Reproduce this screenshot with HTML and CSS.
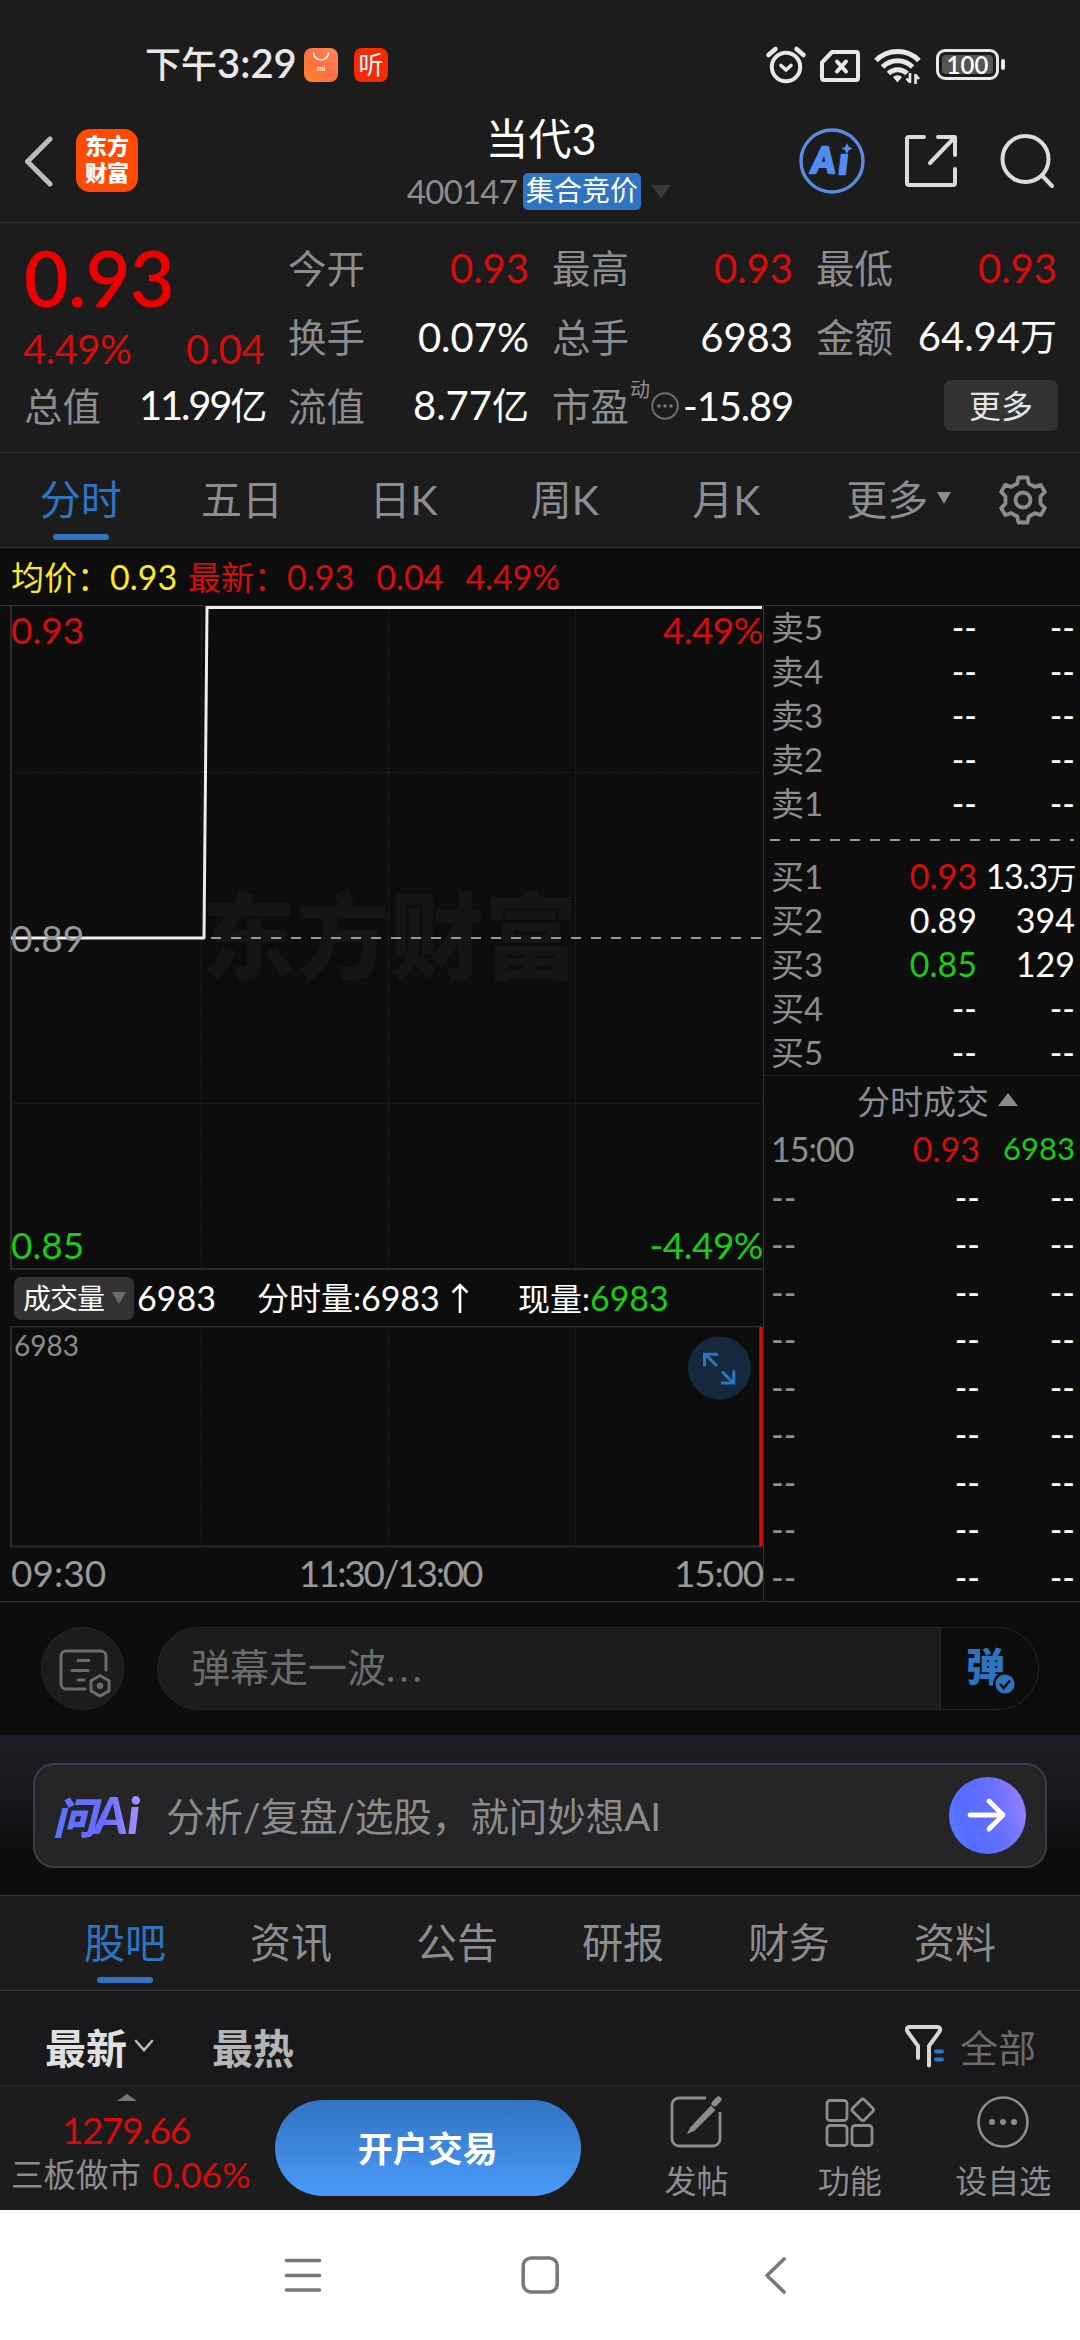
FILE: index.html
```html
<!DOCTYPE html>
<html lang="zh-CN">
<head>
  <meta charset="UTF-8" />
  <meta name="viewport" content="width=device-width, initial-scale=1.0" />
  <title>当代3 400147</title>
  <link rel="stylesheet" href="styles.css">
</head>
<body>
  <div id="app">

    <div class="statusbar">
      <span class="clock">下午<b>3:29</b></span>
      <svg class="app-mi" width="34" height="34" viewBox="0 0 34 34">
        <defs>
          <linearGradient id="miBg" x1="0" y1="1" x2="1" y2="0">
            <stop offset="0" stop-color="#ff8425" /><stop offset="0.5" stop-color="#ff7043" /><stop offset="1" stop-color="#ff8a5c" />
          </linearGradient>
        </defs>
        <rect width="34" height="34" rx="8" fill="url(#miBg)" />
        <path d="M9.500 4.500a7.500 7.500 0 0 0 15 0" fill="none" stroke="#fff" stroke-width="1.600" />
        <text x="17" y="23" class="mi">mi</text>
      </svg>
      <span class="app-ting">听</span>
      <div class="status-icons">
        <svg width="42" height="40" viewBox="0 0 42 40" fill="none" stroke="#e8e8e8" stroke-linecap="round">
          <circle cx="21" cy="22" r="14.200" stroke-width="4" />
          <path d="M3.500 10l7-6M38.500 10l-7-6" stroke-width="4.500" />
          <path d="M16 20.500l5 4.500 5-4.500" stroke-width="3.600" stroke-linejoin="round" />
        </svg>
        <svg class="sim" width="40" height="32" viewBox="0 0 40 32" fill="none" stroke="#e8e8e8" stroke-linecap="round" stroke-linejoin="round">
          <path d="M2 12.500L12 2h24a2 2 0 0 1 2 2v24a2 2 0 0 1-2 2H4a2 2 0 0 1-2-2z" stroke-width="4" />
          <path d="M17 11.500l9 10M26 11.500l-9 10" stroke-width="4" />
        </svg>
        <svg class="wifi" width="48" height="36" viewBox="0 0 48 36" fill="none" stroke="#e8e8e8">
          <path d="M2 12.500a30 30 0 0 1 43 0" stroke-width="5" />
          <path d="M8.500 19a21 21 0 0 1 30 0" stroke-width="5" />
          <path d="M14.500 25.500a13 13 0 0 1 18.500 0" stroke-width="5" />
          <path d="M19 29a7 7 0 0 1 9 0l-4.500 5.500z" fill="#e8e8e8" stroke="none" />
          <path d="M36 25v10M36 34.500l-3.500-4M41.500 36V26M41.500 27l3.500 4" stroke-width="2.600" />
        </svg>
        <span class="battery"><i>100</i></span>
      </div>
    </div>

    <div class="header">
      <svg class="back" width="30" height="52" viewBox="0 0 30 52" fill="none" stroke="#bdbdbd" stroke-width="5" stroke-linecap="round" stroke-linejoin="round">
        <path d="M26 4L3.500 26.500 26 49" />
      </svg>
      <div class="brand"><span>东方</span><span>财富</span></div>
      <div class="title">
        <h1>当代3</h1>
        <div class="subtitle">
          <span>400147</span>
          <span class="tag">集合竞价</span>
          <svg width="20" height="13" viewBox="0 0 20 13"><path d="M0 0h20L10 13z" fill="#3a3a3a" /></svg>
        </div>
      </div>
      <div class="header-icons">
        <svg width="66" height="66" viewBox="0 0 66 66">
          <circle cx="33" cy="33" r="31" fill="none" stroke="#568ce0" stroke-width="3.400" />
          <text x="12.500" y="45" class="ai-a">A</text>
          <text x="40" y="46" class="ai-a">ı</text>
          <path d="M48 15l1.800 3.700 3.700 1.800-3.700 1.800-1.800 3.700-1.800-3.700-3.700-1.800 3.700-1.800z" fill="#4f8df0" />
        </svg>
        <svg width="54" height="54" viewBox="0 0 54 54" fill="none" stroke="#dcdcdc" stroke-width="4" stroke-linecap="round" stroke-linejoin="round">
          <path d="M20 3H5a2 2 0 0 0-2 2v44a2 2 0 0 0 2 2h44a2 2 0 0 0 2-2V35" />
          <path d="M34 3h17v18M50 4L26 29" />
        </svg>
        <svg width="56" height="56" viewBox="0 0 56 56" fill="none" stroke="#dcdcdc" stroke-width="4" stroke-linecap="round">
          <circle cx="25.500" cy="26" r="23" />
          <path d="M43 43.500L52 53" />
        </svg>
      </div>
    </div>

    <div class="quote">
      <div class="price-box">
        <div class="price">0.93</div>
        <div class="cell change"><em class="red">4.49%</em><em class="red">0.04</em></div>
      </div>
      <div class="cell c2">今开<em class="red">0.93</em></div>
      <div class="cell c3">最高<em class="red">0.93</em></div>
      <div class="cell c4">最低<em class="red">0.93</em></div>
      <div class="cell c2">换手<em>0.07%</em></div>
      <div class="cell c3">总手<em>6983</em></div>
      <div class="cell c4">金额<em>64.94<u>万</u></em></div>
      <div class="cell c1">总值<em class="narrow">11.99<u>亿</u></em></div>
      <div class="cell c2">流值<em>8.77<u>亿</u></em></div>
      <div class="cell c3">市盈<sup>动</sup>
        <svg width="30" height="30" viewBox="0 0 30 30"><circle cx="15" cy="15" r="12.800" fill="none" stroke="#6f6f73" stroke-width="2" /><circle cx="9" cy="15" r="1.800" fill="#77777b" /><circle cx="15" cy="15" r="1.800" fill="#77777b" /><circle cx="21" cy="15" r="1.800" fill="#77777b" /></svg>
        <em class="pe">-15.89</em></div>
      <div class="cell c4"><button class="more">更多</button></div>
    </div>

    <div class="tabs period">
      <div class="tab active">分时</div>
      <div class="tab">五日</div>
      <div class="tab">日K</div>
      <div class="tab">周K</div>
      <div class="tab">月K</div>
      <div class="tab wide">更多<svg width="14" height="12" viewBox="0 0 14 12"><path d="M0 0h14L7 12z" fill="#8c8c91" /></svg></div>
      <div class="gear">
        <svg width="50" height="52" viewBox="-25 -26 50 52" fill="none" stroke="#8c8c91" stroke-width="3.800" stroke-linejoin="round">
          <path d="M-4.500-22.500h9l1.300 6 6 3.400 6-2 4 7-4.300 4.600v7l4.300 4.600-4 7-6-2-6 3.400-1.300 6h-9l-1.300-6-6-3.400-6 2-4-7 4.300-4.600v-7l-4.300-4.600 4-7 6 2 6-3.400z" />
          <circle r="7.500" />
        </svg>
      </div>
    </div>

    <div class="info">
      <span class="yellow">均价：</span><em class="yellow">0.93</em>
      <span class="red latest">最新：</span><em class="red">0.93</em><em class="red">0.04</em><em class="red">4.49%</em>
    </div>

    <div class="market">
      <div class="charts">
        <svg class="price-chart" width="763" height="665" viewBox="0 605 763 665">
          <text class="watermark" x="202" y="972" textLength="376">东方财富</text>
          <g class="grid">
            <path d="M201.500 606V1268M388.500 606V1268M575.500 606V1268" />
            <path class="h" d="M11 772.500H762M11 1103.500H762" />
          </g>
          <path class="frame" d="M11 606V1269H762" />
          <path class="mid" d="M11 938H762" />
          <path class="line" d="M11 938H204L207 607.500H762" />
          <text class="axis red" x="11" y="644">0.93</text>
          <text class="axis red end" x="763" y="644">4.49%</text>
          <text class="axis" x="11" y="952">0.89</text>
          <text class="axis green" x="11" y="1259">0.85</text>
          <text class="axis green end" x="763" y="1259">-4.49%</text>
        </svg>
        <div class="indicator">
          <span class="picker">成交量<svg width="14" height="12" viewBox="0 0 14 12"><path d="M0 0h14L7 12z" fill="#6c6c6c" /></svg></span>
          <em>6983</em>
          <span class="minute">分时量:<em>6983</em><svg width="18" height="32" viewBox="0 0 18 32" fill="none" stroke="#fff" stroke-width="2.600"><path d="M9 31V3M1.500 10.500L9 3l7.500 7.500" /></svg></span>
          <span class="now">现量:<em class="green">6983</em></span>
        </div>
        <svg class="volume-chart" width="763" height="222" viewBox="0 1326 763 222">
          <g class="grid"><path d="M201.500 1327V1546M388.500 1327V1546M575.500 1327V1546" /></g>
          <path class="frame" d="M762 1326.500H11V1546.500H762" />
          <path d="M761 1327V1546.500" stroke="#d80c0c" stroke-width="3.500" />
          <text class="small" x="14" y="1356">6983</text>
          <circle cx="719.500" cy="1368" r="31.500" fill="#16283d" />
          <path d="M717 1366l-11-11M704.500 1366.500v-12.300h13.500M722 1371.500l11.500 11.500M721 1383h12.800v-12.700" fill="none" stroke="#2f74c0" stroke-width="3" />
        </svg>
        <div class="times"><span>09:30</span><span class="noon">11:30/13:00</span><span class="close">15:00</span></div>
      </div>

      <div class="book">
        <div class="orders">
          <div class="row"><span>卖5</span><em>--</em><em>--</em></div>
          <div class="row"><span>卖4</span><em>--</em><em>--</em></div>
          <div class="row"><span>卖3</span><em>--</em><em>--</em></div>
          <div class="row"><span>卖2</span><em>--</em><em>--</em></div>
          <div class="row"><span>卖1</span><em>--</em><em>--</em></div>
        </div>
        <div class="split"></div>
        <div class="orders">
          <div class="row"><span>买1</span><em class="red">0.93</em><em class="tight">13.3<u>万</u></em></div>
          <div class="row"><span>买2</span><em>0.89</em><em>394</em></div>
          <div class="row"><span>买3</span><em class="green">0.85</em><em>129</em></div>
          <div class="row"><span>买4</span><em>--</em><em>--</em></div>
          <div class="row"><span>买5</span><em>--</em><em>--</em></div>
        </div>
        <div class="deals-title">分时成交<svg width="20" height="13" viewBox="0 0 20 13"><path d="M0 13h20L10 0z" fill="#8c8c91" /></svg></div>
        <div class="deals">
          <div class="row"><span class="time">15:00</span><em class="red">0.93</em><em class="green vol">6983</em></div>
          <div class="row"><span>--</span><em>--</em><em>--</em></div>
          <div class="row"><span>--</span><em>--</em><em>--</em></div>
          <div class="row"><span>--</span><em>--</em><em>--</em></div>
          <div class="row"><span>--</span><em>--</em><em>--</em></div>
          <div class="row"><span>--</span><em>--</em><em>--</em></div>
          <div class="row"><span>--</span><em>--</em><em>--</em></div>
          <div class="row"><span>--</span><em>--</em><em>--</em></div>
          <div class="row"><span>--</span><em>--</em><em>--</em></div>
          <div class="row"><span>--</span><em>--</em><em>--</em></div>
        </div>
      </div>
    </div>

    <div class="danmu">
      <div class="danmu-set">
        <svg width="52" height="50" viewBox="0 0 52 50" fill="none" stroke="#6b6b6b" stroke-width="3" stroke-linecap="round" stroke-linejoin="round">
          <path d="M47 22V8a5 5 0 0 0-5-5H7a5 5 0 0 0-5 5v28a5 5 0 0 0 5 5h19" />
          <path d="M19 12.500h11M13 22.500h16M19 32h6" />
          <path d="M41 27.500l9 5.200v10.200l-9 5.200-9-5.200V32.700z" />
          <circle cx="41" cy="37.800" r="1.800" fill="#6b6b6b" />
        </svg>
      </div>
      <div class="danmu-input">
        <span>弹幕走一波<u>...</u></span>
        <div class="danmu-toggle">
          <i>弹</i>
          <svg width="24" height="24" viewBox="0 0 24 24"><circle cx="12" cy="12" r="10.800" fill="#2f74c0" stroke="#0d0d0d" stroke-width="2.400" /><path d="M7 12l3.500 4 6.500-7.500" fill="none" stroke="#0d0d0d" stroke-width="2.600" /></svg>
        </div>
      </div>
    </div>

    <div class="ask">
      <div class="ask-box">
        <span class="ask-logo">问<b>Ai</b></span>
        <span class="ask-text">分析/复盘/选股，就问妙想AI</span>
        <div class="ask-go">
          <svg width="42" height="36" viewBox="0 0 42 36" fill="none" stroke="#fff" stroke-width="4.800" stroke-linecap="round" stroke-linejoin="round"><path d="M4 18h32M23 4l14 14-14 14" /></svg>
        </div>
      </div>
    </div>

    <div class="tabs sections">
      <div class="tab active">股吧</div>
      <div class="tab">资讯</div>
      <div class="tab">公告</div>
      <div class="tab">研报</div>
      <div class="tab">财务</div>
      <div class="tab">资料</div>
    </div>

    <div class="filter">
      <span class="newest">最新</span>
      <svg class="chev" width="20" height="13" viewBox="0 0 20 13" fill="none" stroke="#bbb" stroke-width="2.600" stroke-linecap="round"><path d="M2 2l8 9 8-9" /></svg>
      <span class="hottest">最热</span>
      <svg class="funnel" width="40" height="44" viewBox="0 0 40 44" fill="none" stroke="#d6d6d6" stroke-width="4" stroke-linecap="round" stroke-linejoin="round">
        <path d="M13 34V22L2.500 7.500C1 5 2 3 4.500 3h28c2.500 0 3.500 2 2 4.500L24 22v19.500" />
        <path d="M31 27.500h6M31 35.500h6" stroke="#2f74c0" />
      </svg>
      <span class="all">全部</span>
    </div>

    <div class="bottombar">
      <div class="index">
        <svg width="20" height="7" viewBox="0 0 20 7"><path d="M0 7h20L10 0z" fill="#77777b" /></svg>
        <em class="red">1279.66</em>
        <div class="index-name">三板做市<em class="red">0.06%</em></div>
      </div>
      <button class="trade">开户交易</button>
      <div class="action">
        <svg width="54" height="54" viewBox="0 0 54 54" fill="none" stroke="#8c8c91" stroke-width="2.800">
          <path d="M37 3H10a7 7 0 0 0-7 7v34a7 7 0 0 0 7 7h34a7 7 0 0 0 7-7V17" />
          <path d="M22 33L42 12l3 3-20 20-5 2z" fill="#8c8c91" stroke-width="2" />
          <path d="M45.500 8.500l4-4" stroke-width="6" stroke-linecap="round" />
        </svg>
        <span>发帖</span>
      </div>
      <div class="action">
        <svg width="54" height="54" viewBox="0 0 54 54" fill="none" stroke="#8c8c91" stroke-width="2.800" stroke-linejoin="round">
          <rect x="4" y="5.500" width="20" height="20" rx="3" />
          <rect x="4" y="30.500" width="20" height="20" rx="3" />
          <rect x="29" y="30.500" width="20" height="20" rx="3" />
          <rect x="31.500" y="6.500" width="16.500" height="16.500" rx="2.500" transform="rotate(45 39.700 14.800)" />
        </svg>
        <span>功能</span>
      </div>
      <div class="action">
        <svg width="54" height="54" viewBox="0 0 54 54"><circle cx="27" cy="27" r="24.500" fill="none" stroke="#8c8c91" stroke-width="2.600" /><circle cx="16" cy="27" r="3" fill="#8c8c91" /><circle cx="27" cy="27" r="3" fill="#8c8c91" /><circle cx="38" cy="27" r="3" fill="#8c8c91" /></svg>
        <span>设自选</span>
      </div>
    </div>

    <div class="navbar">
      <svg width="38" height="38" viewBox="0 0 38 38" stroke="#787878" stroke-width="3.600" stroke-linecap="round"><path d="M2.500 4.500h33M2.500 19.500h33M2.500 34h33" /></svg>
      <svg width="38" height="38" viewBox="0 0 38 38" fill="none" stroke="#787878" stroke-width="3.600"><rect x="2.200" y="2" width="34" height="34" rx="8" /></svg>
      <svg width="38" height="38" viewBox="0 0 38 38" fill="none" stroke="#787878" stroke-width="3.600" stroke-linecap="round" stroke-linejoin="round"><path d="M27 3L10 19.500 27 36" /></svg>
    </div>

  </div>
</body>
</html>
```
FILE: styles.css
```css
* {
  box-sizing: border-box;
}

body {
  margin: 0;
  background-color: #1c1c1c;
  color: #8c8c91;
  font-family: Lato, "Noto Sans CJK SC", sans-serif;
}

#app {
  width: 1080px;
  height: 2340px;
  overflow: hidden;
  display: flex;
  flex-direction: column;
}

#app > div {
  flex: none;
}

svg {
  display: block;
  flex: none;
}

em, i, u {
  font-style: normal;
  text-decoration: none;
}

em {
  color: #fff;
}

button {
  border: 0;
  padding: 0;
  font-family: inherit;
}

.red {
  color: #d80c0c;
  fill: #d80c0c;
}

.green {
  color: #18cc18;
  fill: #18cc18;
}

.yellow {
  color: #fbea24;
}

/* status bar */
.statusbar {
  height: 115px;
  padding: 14px 75px 0 145px;
  display: flex;
  align-items: center;
}

.clock {
  width: 159px;
  font-size: 36px;
  font-weight: 500;
  line-height: 48px;
  margin-top: -2px;
  color: #e8e8e8;
  white-space: nowrap;
}

.clock b {
  font-size: 40px;
  font-weight: 600;
}

.mi {
  font-size: 8px;
  font-weight: 700;
  text-anchor: middle;
  fill: #fff;
}

.app-ting {
  width: 34px;
  height: 34px;
  margin-left: 16px;
  border-radius: 8px;
  background-color: #f82a04;
  color: #fff;
  font-size: 25px;
  line-height: 32px;
  text-align: center;
}

.status-icons {
  margin-left: auto;
  display: flex;
  align-items: center;
}

.sim {
  margin: 3px 0 0 13px;
}

.wifi {
  margin: 2px 0 0 14px;
}

.battery {
  position: relative;
  width: 63px;
  height: 31px;
  margin: 0 6px 0 14px;
  padding: 3px;
  border: 3px solid #e8e8e8;
  border-radius: 9px;
}

.battery i {
  display: block;
  height: 19px;
  border-radius: 4px;
  background-color: #555;
  color: #fff;
  font-size: 24px;
  font-weight: 600;
  line-height: 19px;
  text-align: center;
}

.battery::after {
  content: "";
  position: absolute;
  right: -9px;
  top: 7px;
  width: 4px;
  height: 11px;
  border-radius: 2px;
  background-color: #e8e8e8;
}

/* header */
.header {
  height: 108px;
  border-bottom: 1px solid #333;
  display: flex;
  align-items: flex-start;
}

.back {
  margin: 20px 0 0 24px;
}

.brand {
  width: 62px;
  height: 63px;
  margin: 14px 0 0 22px;
  padding-top: 3px;
  border-radius: 14px;
  background-color: #fe4a04;
  color: #fff;
  font-size: 22px;
  font-weight: 900;
  line-height: 27px;
  text-align: center;
}

.brand span {
  display: block;
}

.title {
  width: 264px;
  margin-left: 269px;
}

.title h1 {
  margin: 0 0 0 4px;
  color: #fff;
  font-size: 43px;
  font-weight: 400;
  line-height: 48px;
  text-align: center;
}

.subtitle {
  height: 38px;
  margin-top: 9px;
  display: flex;
  align-items: center;
  font-size: 33px;
  line-height: 38px;
}

.tag {
  width: 118px;
  height: 37px;
  margin: 0 10px 0 8px;
  border-radius: 5px;
  background-color: #2f74c0;
  color: #fff;
  font-size: 28px;
  line-height: 35px;
  text-align: center;
}

.subtitle span:first-child {
  width: 108px;
  letter-spacing: -0.8px;
}

.header-icons {
  margin: 13px 0 0 128px;
  display: flex;
  align-items: center;
}

.header-icons svg + svg {
  margin-left: 39px;
}

.header-icons svg:last-child {
  margin-left: 42px;
}

.ai-a {
  font-size: 36px;
  font-weight: 900;
  font-style: italic;
  fill: #4f8df0;
  stroke: #4f8df0;
  stroke-width: 2.5;
  stroke-linejoin: round;
}

/* quote */
.quote {
  height: 230px;
  padding: 10px 23px 0 24px;
  border-bottom: 1px solid #333;
  display: grid;
  grid-template-columns: repeat(4, 240px);
  grid-template-rows: repeat(3, 69px);
  column-gap: 24px;
}

.price-box {
  grid-row: 1 / 3;
  grid-column: 1;
}

.price {
  height: 82px;
  color: #ee0000;
  font-size: 77px;
  font-weight: 600;
  line-height: 89px;
  letter-spacing: -0.5px;
}

.cell {
  display: flex;
  align-items: center;
  font-size: 38.500px;
  line-height: 50px;
  white-space: nowrap;
  color: #8c8c91;
}

.cell em {
  margin-left: auto;
  margin-right: -1px;
  font-size: 40px;
}

.cell u {
  font-size: 37px;
}

.cell em.red {
  color: #d80c0c;
}

.cell em.narrow {
  letter-spacing: -2.2px;
}

.cell em.pe {
  letter-spacing: -1.2px;
}

.change em:first-child {
  margin-left: -1px;
  letter-spacing: -0.5px;
}

.change {
  padding-top: 9px;
}

.c1 { grid-column: 1; }
.c2 { grid-column: 2; }
.c3 { grid-column: 3; }
.c4 { grid-column: 4; }

.cell sup {
  font-size: 20px;
  line-height: 20px;
  margin: -34px 0 0 1px;
}

.more {
  width: 114px;
  height: 51px;
  margin: 0 -2px 0 auto;
  padding-bottom: 3px;
  border-radius: 7px;
  background-color: #333;
  color: #e4e4e4;
  font-size: 32px;
}

/* tabs */
.tabs {
  height: 95px;
  border-bottom: 1px solid #333;
  display: flex;
}

.tab {
  position: relative;
  width: 161.4px;
  display: flex;
  align-items: center;
  justify-content: center;
  font-size: 41px;
  line-height: 94px;
}

.tab.active {
  color: #2f74c0;
}

.tab.active::after {
  content: "";
  position: absolute;
  left: 50%;
  bottom: 7px;
  width: 56px;
  height: 6px;
  margin-left: -28px;
  border-radius: 3px;
  background-color: #2f74c0;
}

.tab.wide {
  padding-left: 22px;
}

.tab.wide svg {
  margin: -4px 0 0 9px;
}

.gear {
  margin: 21px 0 0 30px;
}

.sections {
  padding-left: 42px;
}

.sections .tab {
  width: 166px;
}

/* intraday info line */
.info {
  height: 58px;
  padding-left: 11px;
  border-bottom: 1px solid #333;
  background-color: #0d0d0d;
  display: flex;
  align-items: center;
  font-size: 33px;
  line-height: 56px;
}

.info em {
  font-size: 34px;
}

.info span {
  width: 99px;
  white-space: nowrap;
}

.info em.yellow {
  color: #fbea24;
  width: 78px;
}

.info em.red {
  color: #d80c0c;
  margin-right: 22px;
}

/* charts */
.market {
  height: 996px;
  border-bottom: 1px solid #333;
  background-color: #0d0d0d;
  display: flex;
}

.charts {
  width: 763px;
}

.price-chart {
  margin-top: -1px;
}

.grid path {
  stroke: #242424;
  stroke-width: 1.5;
  stroke-dasharray: 1.5 1.5;
}

.frame {
  fill: none;
  stroke: #2c2c2c;
  stroke-width: 2;
}

.mid {
  stroke: #999;
  stroke-width: 2;
  stroke-dasharray: 10 10;
}

.line {
  fill: none;
  stroke: #eee;
  stroke-width: 3;
  stroke-linejoin: round;
}

.watermark {
  font-size: 94px;
  font-weight: 900;
  fill: #151515;
}

.axis {
  font-size: 37px;
}

.axis:not(.red):not(.green) {
  fill: #999;
}

.end {
  text-anchor: end;
  letter-spacing: -0.5px;
}

.indicator {
  height: 56px;
  padding-left: 14px;
  display: flex;
  align-items: center;
  color: #fff;
  font-size: 32px;
  line-height: 54px;
}

.indicator em {
  font-size: 34px;
}

.indicator em.green {
  color: #18cc18;
}

.picker {
  width: 120px;
  height: 43px;
  margin-right: 3px;
  padding-left: 9px;
  border-radius: 7px;
  background-color: #333;
  display: flex;
  align-items: center;
  font-size: 28px;
  letter-spacing: -1px;
}

.picker svg {
  margin-left: 8px;
}

.minute {
  width: 261px;
  margin-left: 41px;
  display: flex;
  align-items: center;
}

.minute svg {
  margin-left: 11px;
}

.small {
  font-size: 28px;
  fill: #8c8c8c;
}

.times {
  height: 50px;
  padding: 0 0 0 11px;
  display: flex;
  justify-content: space-between;
  font-size: 37px;
  line-height: 50px;
  color: #999;
}

.noon {
  letter-spacing: -2.2px;
}

.close {
  letter-spacing: -1.2px;
}

/* order book */
.book {
  width: 317px;
  border-left: 1px solid #333;
}

.row {
  height: 44px;
  padding: 0 5px 0 7px;
  display: flex;
  align-items: center;
  font-size: 34px;
  line-height: 44px;
}

.row span {
  width: 90px;
  white-space: nowrap;
}

.row em {
  width: 116px;
  text-align: right;
}

.row em:last-child {
  width: 98px;
  white-space: nowrap;
}

.row em.red {
  color: #d80c0c;
}

.row em.green {
  color: #18cc18;
}

.row .tight {
  letter-spacing: -1.6px;
}

.row u {
  font-size: 30px;
}

.row .time {
  letter-spacing: -1px;
}

.orders .row span {
  font-size: 33px;
}

.orders {
  position: relative;
  top: -1px;
}

.split {
  height: 29px;
  margin: 0 6px;
  background: repeating-linear-gradient(90deg, #999 0 10px, transparent 10px 20px) 0 13px / 100% 2px no-repeat;
}

.deals-title {
  height: 50px;
  padding-left: 93px;
  border-top: 1px solid #262626;
  display: flex;
  align-items: center;
  font-size: 33px;
  line-height: 48px;
}

.deals-title svg {
  margin: -3px 0 0 9px;
}

.deals .row {
  height: 47.500px;
  line-height: 47.500px;
}

.deals .row em:nth-child(2) {
  width: 119px;
}

.deals .row em:last-child {
  width: 95px;
}

.deals .row .vol {
  font-size: 31px;
}

/* danmu */
.danmu {
  height: 133px;
  padding: 0 41px;
  background-color: #0d0d0d;
  display: flex;
  align-items: center;
}

.danmu-set {
  width: 83px;
  height: 83px;
  padding: 20px 0 0 17px;
  border: 1px solid #262626;
  border-radius: 50%;
  background-color: #1c1c1c;
}

.danmu-input {
  width: 882px;
  height: 83px;
  margin-left: 33px;
  border: 1px solid #262626;
  border-radius: 42px;
  background-color: #1c1c1c;
  overflow: hidden;
  display: flex;
  justify-content: space-between;
  font-size: 39px;
  line-height: 79px;
  color: #6b6b6b;
}

.danmu-input span {
  padding-left: 33px;
}

.danmu-input u {
  letter-spacing: 4px;
}

.danmu-toggle {
  position: relative;
  width: 98px;
  border-left: 1px solid #262626;
  background-color: #0d0d0d;
}

.danmu-toggle i {
  display: block;
  padding-left: 25px;
  color: #2f74c0;
  font-weight: 900;
  line-height: 77px;
}

.danmu-toggle svg {
  position: absolute;
  left: 52px;
  top: 44px;
}

/* ask ai */
.ask {
  height: 161px;
  padding: 28px 33px 0;
  border-bottom: 1px solid #333;
  background: linear-gradient(#1f1e26, #18171c 40%, #0d0d0d 75%);
}

.ask-box {
  height: 105px;
  padding: 0 19px 0 18px;
  border: 2px solid transparent;
  border-radius: 21px;
  background: linear-gradient(#252527, #252527) padding-box, linear-gradient(#3a3a5c, #3d3d40) border-box;
  display: flex;
  align-items: center;
}

.ask-logo {
  width: 113px;
  background: linear-gradient(90deg, #5a74ff, #6a6cff 45%, #a896ff 80%);
  -webkit-background-clip: text;
  background-clip: text;
  color: transparent;
  font-size: 43px;
  font-weight: 900;
  font-style: italic;
  line-height: 60px;
  letter-spacing: -2px;
}

.ask-logo b {
  font-size: 52px;
  font-weight: 900;
  letter-spacing: -1px;
}

.ask-text {
  margin-top: -4px;
  color: #8c8c8c;
  font-size: 38.500px;
  white-space: nowrap;
}

.ask-go {
  width: 77px;
  height: 77px;
  margin-left: auto;
  padding: 20px 0 0 17px;
  border-radius: 50%;
  background: linear-gradient(75deg, #5a84ff, #566cff 25%, #6670ff 60%, #9c86ff);
}

/* filter */
.filter {
  height: 95px;
  padding: 15px 44px 0 45px;
  border-bottom: 1px solid #2a2a2c;
  background-color: #19191b;
  display: flex;
  align-items: center;
  font-size: 41px;
}

.newest {
  color: #e0e0e0;
  font-weight: 700;
}

.chev {
  margin-left: 7px;
}

.hottest {
  margin-left: 58px;
  color: #b4b4b4;
  font-weight: 700;
}

.funnel {
  margin-left: auto;
}

.all {
  margin-left: 15px;
  color: #6b6b6b;
  font-size: 38px;
}

/* bottom bar */
.bottombar {
  height: 124px;
  display: flex;
}

.index {
  width: 275px;
  display: flex;
  flex-direction: column;
  padding: 8px 0 0 11px;
}

.index svg {
  margin-left: 106px;
}

.index > em {
  margin: 6px 0 0 51px;
  font-size: 37px;
  line-height: 46px;
  color: #d80c0c;
  letter-spacing: -1.4px;
}

.index-name {
  display: flex;
  font-size: 32.500px;
  line-height: 44px;
  white-space: nowrap;
}

.index-name em {
  margin-left: 11px;
  color: #d80c0c;
  font-size: 35.500px;
}

.trade {
  width: 306px;
  height: 96px;
  margin: 14px 39px 0 0;
  padding-bottom: 4px;
  border-radius: 48px;
  background: linear-gradient(#3174c1, #4a9afa);
  color: #fff;
  font-size: 35px;
  font-weight: 700;
}

.action {
  width: 153.500px;
  padding-top: 9px;
  display: flex;
  flex-direction: column;
  align-items: center;
  font-size: 32px;
  line-height: 40px;
}

.action span {
  margin-top: 12px;
}

/* system navigation */
.navbar {
  height: 130px;
  padding: 0 285px 0 284px;
  background-color: #fff;
  display: flex;
  align-items: center;
  justify-content: space-between;
}
```
